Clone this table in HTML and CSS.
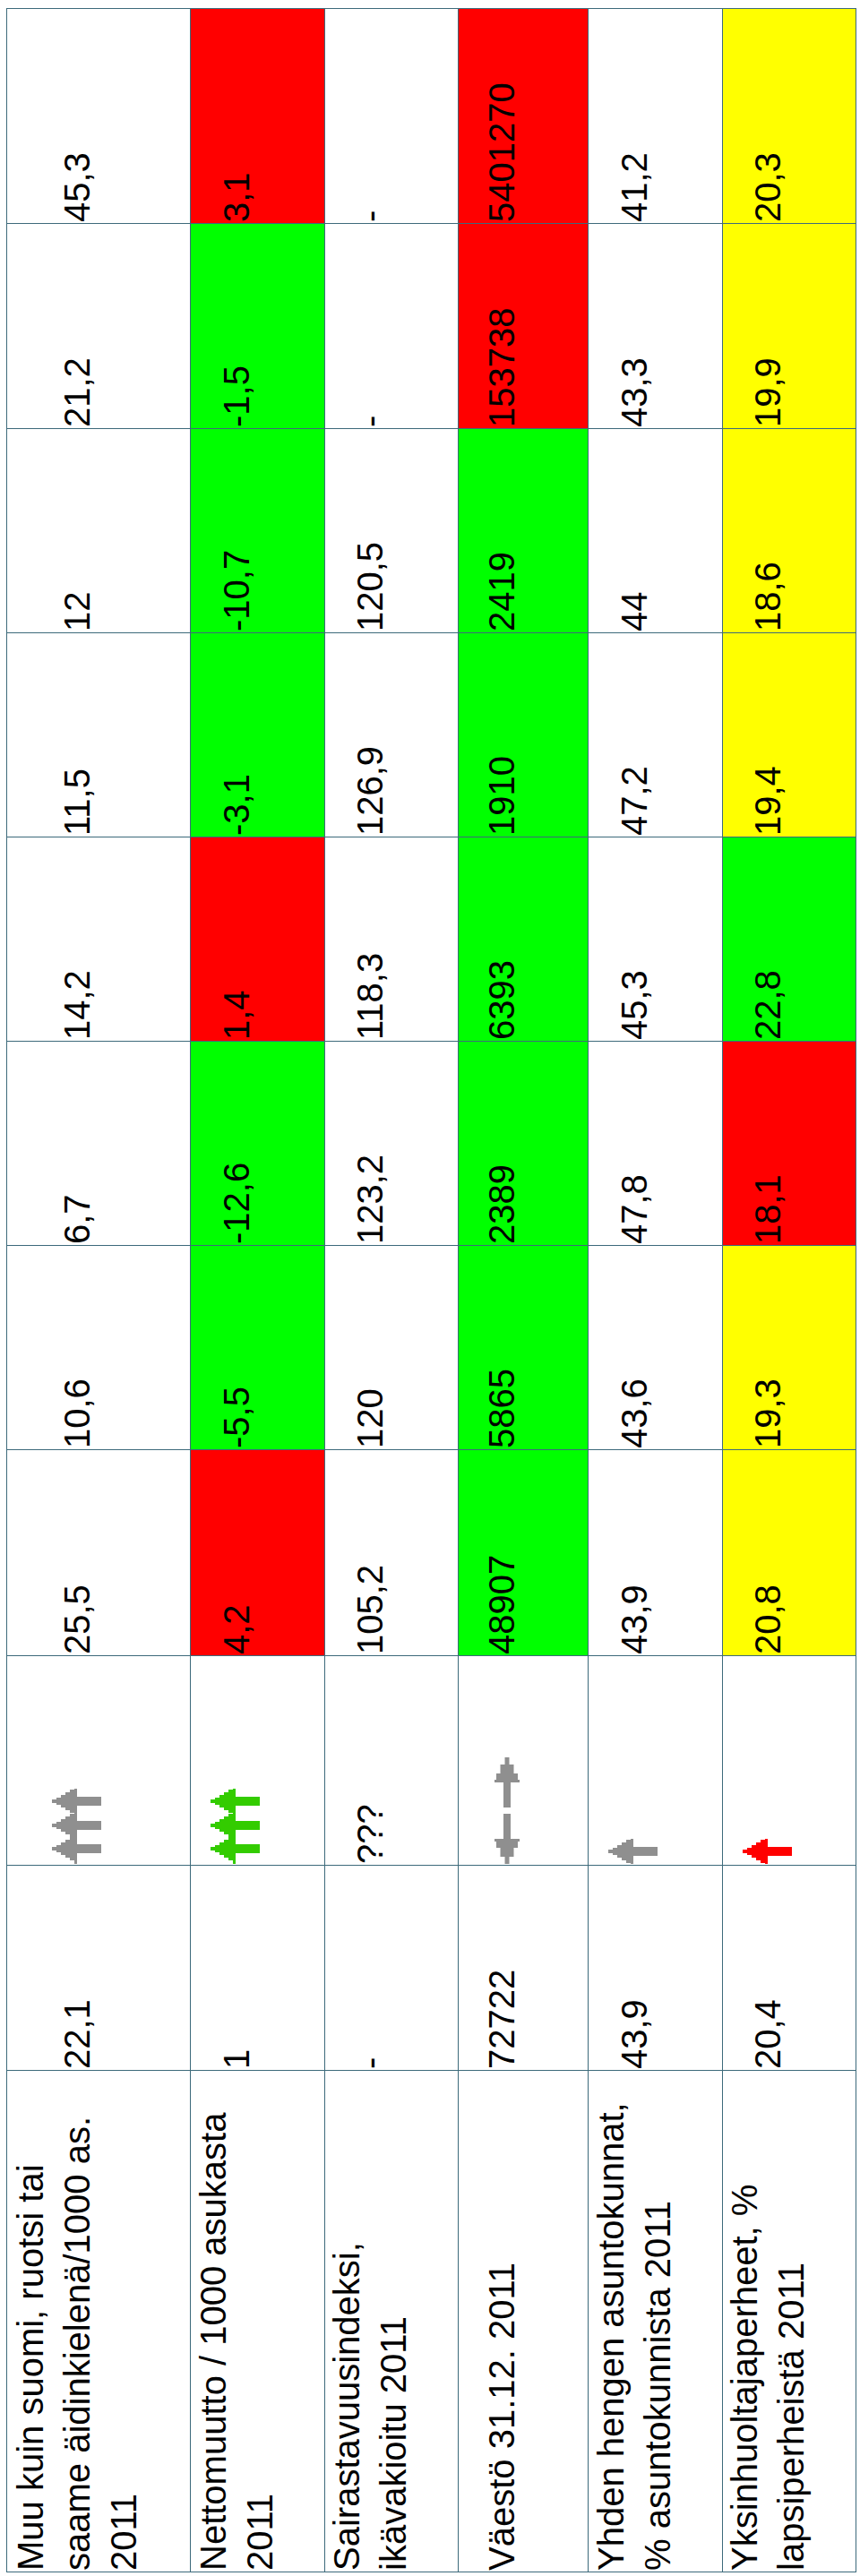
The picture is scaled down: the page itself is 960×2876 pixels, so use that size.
FILE: index.html
```html
<!DOCTYPE html>
<html lang="fi">
<head>
<meta charset="utf-8">
<title>Indikaattorit</title>
<link rel="stylesheet" href="styles.css">
</head>
<body>
<div class="page">
  <div class="sheet">
    <!-- Rivi 1 -->
    <div class="c">Muu kuin suomi, ruotsi tai<br>saame äidinkielenä/1000 as.<br>2011</div>
    <div class="c">22,1</div>
    <div class="c"><svg class="ico" width="56" height="84" viewBox="0 0 56 84"><g fill="#8f8f8f"><rect x="25" y="0" width="3" height="84"/><path transform="translate(0,14)" d="M0 -2H5V-4H10V-7H15V-10H20V-13H25V-5H55V5H25V13H20V10H15V7H10V4H5V2H0Z"/><path transform="translate(0,41)" d="M0 -2H5V-4H10V-7H15V-10H20V-13H25V-5H55V5H25V13H20V10H15V7H10V4H5V2H0Z"/><path transform="translate(0,67)" d="M0 -2H5V-4H10V-7H15V-10H20V-13H25V-5H55V5H25V13H20V10H15V7H10V4H5V2H0Z"/></g></svg></div>
    <div class="c">25,5</div>
    <div class="c">10,6</div>
    <div class="c">6,7</div>
    <div class="c">14,2</div>
    <div class="c">11,5</div>
    <div class="c">12</div>
    <div class="c">21,2</div>
    <div class="c">45,3</div>
    <!-- Rivi 2 -->
    <div class="c">Nettomuutto / 1000 asukasta<br>2011</div>
    <div class="c">1</div>
    <div class="c"><svg class="ico" width="56" height="84" viewBox="0 0 56 84"><g fill="#33cc00"><rect x="25" y="0" width="3" height="84"/><path transform="translate(0,14)" d="M0 -2H5V-4H10V-7H15V-10H20V-13H25V-5H55V5H25V13H20V10H15V7H10V4H5V2H0Z"/><path transform="translate(0,41)" d="M0 -2H5V-4H10V-7H15V-10H20V-13H25V-5H55V5H25V13H20V10H15V7H10V4H5V2H0Z"/><path transform="translate(0,67)" d="M0 -2H5V-4H10V-7H15V-10H20V-13H25V-5H55V5H25V13H20V10H15V7H10V4H5V2H0Z"/></g></svg></div>
    <div class="c r">4,2</div>
    <div class="c g">-5,5</div>
    <div class="c g">-12,6</div>
    <div class="c r">1,4</div>
    <div class="c g">-3,1</div>
    <div class="c g">-10,7</div>
    <div class="c g">-1,5</div>
    <div class="c r">3,1</div>
    <!-- Rivi 3 -->
    <div class="c">Sairastavuusindeksi,<br>ikävakioitu 2011</div>
    <div class="c">-</div>
    <div class="c">???</div>
    <div class="c">105,2</div>
    <div class="c">120</div>
    <div class="c">123,2</div>
    <div class="c">118,3</div>
    <div class="c">126,9</div>
    <div class="c">120,5</div>
    <div class="c">-</div>
    <div class="c">-</div>
    <!-- Rivi 4 -->
    <div class="c">Väestö 31.12. 2011</div>
    <div class="c">72722</div>
    <div class="c"><svg class="ico dbl" width="30" height="119" viewBox="0 0 30 119"><g fill="#8f8f8f"><path d="M12.5 0H17.5V8H22.5V18H27V25H29V28H19V56H11V28H1V25H3V18H7.5V8H12.5Z"/><path d="M11 63H19V91H29V94H27V101H22.5V111H17.5V119H12.5V111H7.5V101H3V94H1V91H11Z"/></g></svg></div>
    <div class="c g">48907</div>
    <div class="c g">5865</div>
    <div class="c g">2389</div>
    <div class="c g">6393</div>
    <div class="c g">1910</div>
    <div class="c g">2419</div>
    <div class="c r">153738</div>
    <div class="c r">5401270</div>
    <!-- Rivi 5 -->
    <div class="c">Yhden hengen asuntokunnat,<br>% asuntokunnista 2011</div>
    <div class="c">43,9</div>
    <div class="c"><svg class="ico" width="56" height="28" viewBox="0 0 56 28"><g fill="#8f8f8f"><rect x="25" y="0" width="3" height="28"/><path transform="translate(0,14)" d="M0 -2H5V-4H10V-7H15V-10H20V-13H25V-5H55V5H25V13H20V10H15V7H10V4H5V2H0Z"/></g></svg></div>
    <div class="c">43,9</div>
    <div class="c">43,6</div>
    <div class="c">47,8</div>
    <div class="c">45,3</div>
    <div class="c">47,2</div>
    <div class="c">44</div>
    <div class="c">43,3</div>
    <div class="c">41,2</div>
    <!-- Rivi 6 -->
    <div class="c">Yksinhuoltajaperheet, %<br>lapsiperheistä 2011</div>
    <div class="c">20,4</div>
    <div class="c"><svg class="ico" width="56" height="28" viewBox="0 0 56 28"><g fill="#ff0000"><rect x="25" y="0" width="3" height="28"/><path transform="translate(0,14)" d="M0 -2H5V-4H10V-7H15V-10H20V-13H25V-5H55V5H25V13H20V10H15V7H10V4H5V2H0Z"/></g></svg></div>
    <div class="c y">20,8</div>
    <div class="c y">19,3</div>
    <div class="c r">18,1</div>
    <div class="c g">22,8</div>
    <div class="c y">19,4</div>
    <div class="c y">18,6</div>
    <div class="c y">19,9</div>
    <div class="c y">20,3</div>
  </div>
</div>
</body>
</html>
```

FILE: styles.css
```css
html, body {
  margin: 0;
  padding: 0;
  background: #ffffff;
}

.page {
  padding: 9px 0 0 7px;
}

.sheet {
  writing-mode: vertical-rl;
  display: grid;
  box-sizing: border-box;
  width: 949px;
  height: 2863px;
  padding: 1px;
  gap: 1px;
  background: #3d6a7b;
  grid-template-columns: 559px 228px 233px 229px 227px 227px 227px 227px 227px 228px 239px;
  grid-template-rows: 204px 149px 148px 144px 149px 148px;
  transform: rotate(180deg);
  font-family: "Liberation Sans", Arial, sans-serif;
  font-size: 40px;
  line-height: 52px;
  color: #000000;
}

.c {
  background: #ffffff;
  display: flex;
  flex-direction: column;
  justify-content: center;
  align-items: flex-start;
  box-sizing: border-box;
  padding-block-end: 48px;
  padding-inline-start: 1px;
  white-space: nowrap;
  overflow: hidden;
}

.r { background: #ff0000; }
.g { background: #00ff00; }
.y { background: #ffff00; }

.ico {
  flex: none;
  display: block;
  transform: rotate(180deg);
}

.dbl {
  margin-block-start: 12px;
}
```
